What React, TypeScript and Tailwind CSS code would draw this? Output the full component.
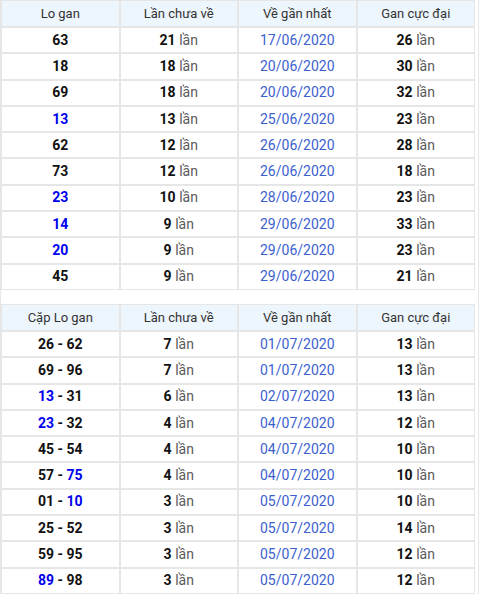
import type { ReactNode } from 'react';

type Row = [ReactNode, number, string, number];

const B = ({ children }: { children: ReactNode }) => <span className="text-[#0000ee]">{children}</span>;

const loGan: Row[] = [
  ['63', 21, '17/06/2020', 26],
  ['18', 18, '20/06/2020', 30],
  ['69', 18, '20/06/2020', 32],
  [<B>13</B>, 13, '25/06/2020', 23],
  ['62', 12, '26/06/2020', 28],
  ['73', 12, '26/06/2020', 18],
  [<B>23</B>, 10, '28/06/2020', 23],
  [<B>14</B>, 9, '29/06/2020', 33],
  [<B>20</B>, 9, '29/06/2020', 23],
  ['45', 9, '29/06/2020', 21],
];

const capLoGan: Row[] = [
  ['26 - 62', 7, '01/07/2020', 13],
  ['69 - 96', 7, '01/07/2020', 13],
  [<><B>13</B> - 31</>, 6, '02/07/2020', 13],
  [<><B>23</B> - 32</>, 4, '04/07/2020', 12],
  ['45 - 54', 4, '04/07/2020', 10],
  [<>57 - <B>75</B></>, 4, '04/07/2020', 10],
  [<>01 - <B>10</B></>, 3, '05/07/2020', 10],
  ['25 - 52', 3, '05/07/2020', 14],
  ['59 - 95', 3, '05/07/2020', 12],
  [<><B>89</B> - 98</>, 3, '05/07/2020', 12],
];

const cell = 'border border-[#e6e6e6] h-[26.3px] p-0 text-center align-middle';

function Lan({ n }: { n: number }) {
  return (
    <>
      <b className="font-bold text-[#111]">{n}</b> <span className="text-[#5a5a5a]">lần</span>
    </>
  );
}

function GanTable({ first, rows }: { first: string; rows: Row[] }) {
  return (
    <table className="w-[474px] table-fixed border-separate border-spacing-0 text-[14px]">
      <thead>
        <tr className="bg-[#edf5fd] text-[13px] text-[#333]">
          <th className={`${cell} !h-[27px] font-normal`}>{first}</th>
          <th className={`${cell} !h-[27px] font-normal`}>Lần chưa về</th>
          <th className={`${cell} !h-[27px] font-normal`}>Về gần nhất</th>
          <th className={`${cell} !h-[27px] font-normal`}>Gan cực đại</th>
        </tr>
      </thead>
      <tbody>
        {rows.map((r, i) => (
          <tr key={i}>
            <td className={`${cell} font-bold text-[#111]`}>{r[0]}</td>
            <td className={cell}><Lan n={r[1]} /></td>
            <td className={`${cell} text-[#3b5fcf]`}>{r[2]}</td>
            <td className={cell}><Lan n={r[3]} /></td>
          </tr>
        ))}
      </tbody>
    </table>
  );
}

export default function App() {
  return (
    <div className="w-[479px] h-[594px] bg-white font-['Roboto',sans-serif]">
      <div className="flex flex-col gap-[14px] border border-[#e6e6e6] border-t-0 pb-[1px]">
        <GanTable first="Lo gan" rows={loGan} />
        <GanTable first="Cặp Lo gan" rows={capLoGan} />
      </div>
    </div>
  );
}
